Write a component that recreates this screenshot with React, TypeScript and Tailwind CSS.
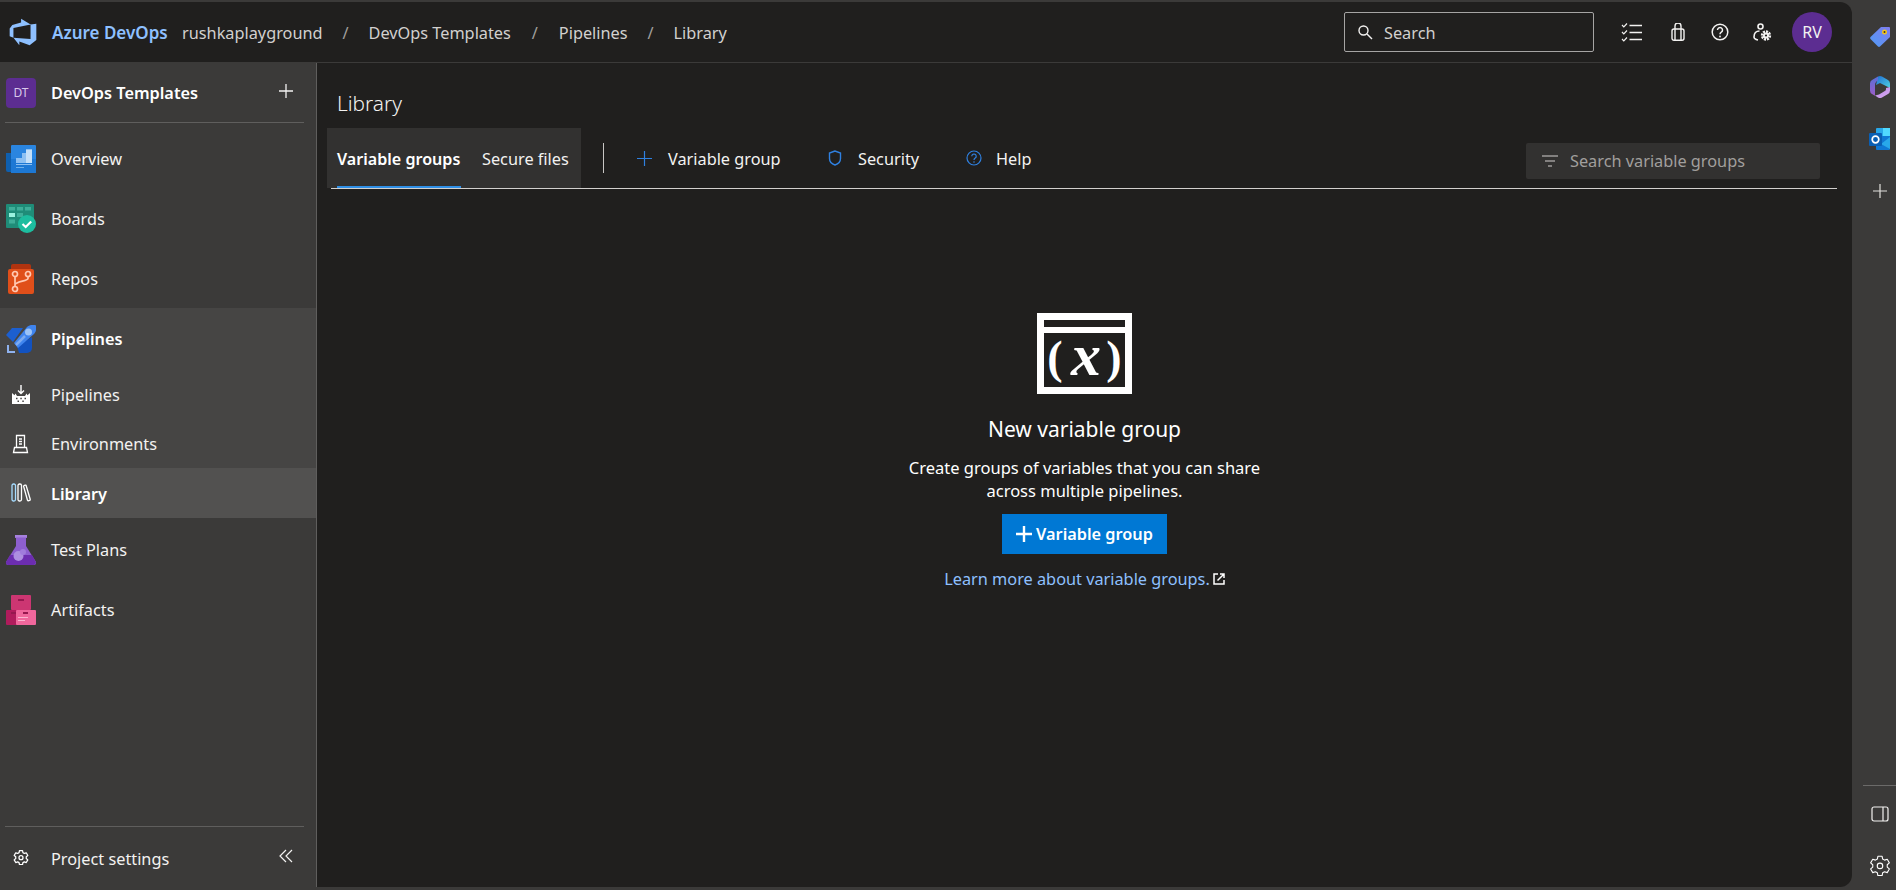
import React from "react";

const Logo = () => (
  <svg width="30" height="30" viewBox="0 0 18 18" fill="#8ec0ff">
    <path d="M17 4v9.74l-4 3.28-6.2-2.26V17l-3.51-4.59 10.23.8V4.44zm-3.41.49L7.85 1v2.29L2.58 4.84 1 6.87v4.61l2.26 1V6.57z" />
  </svg>
);

const OverviewIcon = () => (
  <svg width="30" height="30" viewBox="0 0 30 30">
    <path d="M0 9h8v19H2a2 2 0 0 1-2-2z" fill="#0f5fae" />
    <path d="M5 2a1 1 0 0 1 1-1h23a1 1 0 0 1 1 1v26a1 1 0 0 1-1 1H5z" fill="#2a85e0" />
    <path d="M5 15h25v13a1 1 0 0 1-1 1H5z" fill="#1d78d4" />
    <path d="M10 19v-5h6V9h4V5.500h6V19z" fill="#8dc0f2" />
    <path d="M20 5.500h6V19h-6z" fill="#c5e0f9" />
    <path d="M10 20h16v1H10z" fill="#8dc0f2" />
    <path d="M10 23h8v1h-8z" fill="#6fb0ea" />
  </svg>
);
const BoardsIcon = () => (
  <svg width="30" height="30" viewBox="0 0 30 30">
    <rect x="0" y="0" width="28" height="24" rx="1" fill="#1f8c78" />
    <path d="M3 3h6v3.500H3zM11 3h6v3.500h-6zM19 3h6v3.500h-6zM11 9h6v4h-6zM3 15.500h6v4H3z" fill="#3fae99" />
    <rect x="3" y="9" width="6" height="4" fill="#9bf1de" />
    <circle cx="21" cy="20" r="9" fill="#1dbd9f" />
    <path d="M16.500 20l3.200 3 5.500-5.500" fill="none" stroke="#fff" strokeWidth="2.200" />
  </svg>
);
const ReposIcon = () => (
  <svg width="30" height="30" viewBox="0 0 30 30">
    <path d="M5 2a2 2 0 0 1 2-2h16a2 2 0 0 1 2 2v5H5z" fill="#b0330f" />
    <path d="M2 7a2 2 0 0 1 2-2h22a2 2 0 0 1 2 2v21a2 2 0 0 1-2 2H4a2 2 0 0 1-2-2z" fill="#e04f1a" />
    <g fill="none" stroke="#ffc9b3" strokeWidth="1.700">
      <circle cx="9" cy="10" r="2.500" />
      <circle cx="22" cy="10" r="2.500" />
      <circle cx="9" cy="25" r="2.500" />
      <path d="M9 12.500v10M22 12.500v2c0 2.500-13 3-13 6.500" />
    </g>
  </svg>
);
const RocketIcon = () => (
  <svg width="30" height="30" viewBox="0 0 30 30">
    <path d="M6 4h11L7 18 0 11z" fill="#1c5fd0" />
    <path d="M26 13v11a5 5 0 0 1-5 5H13l-2-7z" fill="#1252c0" />
    <path d="M8 19L21 3c1-1 3-2 4-2h4a1 1 0 0 1 1 1v4c0 1-1 3-2 4L12 24z" fill="#3f84ee" />
    <circle cx="22.500" cy="8" r="3.500" fill="#9cc3f7" />
    <path d="M10 21L19 12" stroke="#7daaf0" strokeWidth="2.500" />
    <path d="M1 21v8h8v-2H3v-6z" fill="#8fb2ee" />
  </svg>
);
const FlaskIcon = () => (
  <svg width="30" height="30" viewBox="0 0 30 30">
    <path d="M9 0h12v3h-1v8l10 16a2.500 2.500 0 0 1-2 3H2a2.500 2.500 0 0 1-2-3L10 11V3H9z" fill="#8d5fcf" />
    <path d="M9 0h12v2.500H9z" fill="#a681dd" />
    <path d="M4 20h22l3.800 7a2.500 2.500 0 0 1-2 3H2a2.500 2.500 0 0 1-2-3z" fill="#6c2db0" />
    <circle cx="12.500" cy="21" r="5" fill="#ad8ee0" />
    <circle cx="17" cy="17" r="3" fill="#a07cdc" />
  </svg>
);
const ArtifactsIcon = () => (
  <svg width="30" height="30" viewBox="0 0 30 30">
    <rect x="5" y="0" width="20" height="15" rx="1" fill="#cc3672" />
    <rect x="0" y="15" width="16" height="15" rx="1" fill="#b01c5c" />
    <rect x="10" y="15" width="20" height="15" rx="1" fill="#f0679c" />
    <path d="M12 4h6v2h-6zM5 17h5v2H5zM17 17h5v2h-5z" fill="#96184f" />
    <path d="M12 22h10v1H12zM12 25h7v1h-7z" fill="#fbb3cf" />
  </svg>
);
const PipeSub = () => (
  <svg width="20" height="20" viewBox="0 0 20 20" fill="none" stroke="#fff" strokeWidth="1.400">
    <path d="M10 0v8M7 5.500L10 8.500l3-3" />
    <path d="M1 8l2.500 2.200 1-1.600 1.500 2.400h8l1.500-2.400 1 1.600L19 8v11H1z" fill="#fff" stroke="none" />
    <path d="M5 13.500h1.500M9.300 13.500h1.500M13.500 13.500h1.500M6.500 16.300h1.500M11.300 16.300h1.500" stroke="#464544" strokeWidth="1.400" />
  </svg>
);
const EnvIcon = () => (
  <svg width="20" height="20" viewBox="0 0 20 20" fill="none" stroke="#fff" strokeWidth="1.300">
    <path d="M5.500 13.500V1.500h8v12M2.500 18.500l1-5h12l1 5z" />
    <path d="M8 5h3M8 7.500h3M8 10h3" />
  </svg>
);
const LibIcon = () => (
  <svg width="20" height="20" viewBox="0 0 20 20" fill="none" stroke="#fff" strokeWidth="1.300">
    <rect x="1" y="1" width="3.500" height="17" rx="1.500" stroke="#a6dcff" />
    <rect x="7" y="1" width="3.500" height="17" rx="1.500" />
    <path d="M12.500 3l1.500-.8c.5-.2 1 0 1.200.5l4 13.500c.1.500 0 1-.5 1.100l-1 .4c-.5.200-1 0-1.200-.5z" />
  </svg>
);
const GearIcon = ({ size = 16, strokeWidth = 1.5 }: { size?: number; strokeWidth?: number }) => (
  <svg width={size} height={size} viewBox="0 0 24 24" fill="none" stroke="#fff" strokeWidth={strokeWidth} strokeLinejoin="round">
    <path d="M9.700 2.500h4.600l.6 3 2.100 1.200 2.900-1 2.300 4-2.300 2v2.600l2.300 2-2.300 4-2.900-1-2.100 1.200-.6 3H9.700l-.6-3L7 19.300l-2.900 1-2.300-4 2.300-2v-2.600l-2.300-2 2.300-4 2.900 1 2.100-1.200z" />
    <circle cx="12" cy="13" r="3" />
  </svg>
);

const Row = ({ icon, label, bold, h = "h-[60px]", bg = "", sub, tp = "pt-[1px]" }: { icon: React.ReactNode; label: string; bold?: boolean; h?: string; bg?: string; sub?: boolean; tp?: string }) => (
  <div className={`flex items-center ${h} ${bg}`}>
    <div className={sub ? "w-[51px] pl-[11px] flex items-center" : "w-[51px] pl-[6px] flex items-center"}>{icon}</div>
    <span className={`${tp} ${bold ? "font-semibold text-white" : "text-[#f3f2f1]"}`}>{label}</span>
  </div>
);

const Sidebar = () => (
  <aside className="w-[317px] shrink-0 bg-[#3b3a39] border-r border-[#5f5e5d] flex flex-col text-[16.300px]">
    <div className="h-[59px] flex items-center pl-[6px] pr-[16px] shrink-0">
      <div className="w-[30px] h-[30px] rounded bg-[#5c2d91] text-[#d8c8ea] text-[12px] flex items-center justify-center">DT</div>
      <span className="ml-[15px] font-semibold text-white flex-1 pt-[2px]">DevOps Templates</span>
      <svg width="16" height="16" viewBox="0 0 16 16" stroke="#f3f2f1" strokeWidth="1.300" className="mr-[6px] -mt-[3px]"><path d="M8 1v14M1 8h14" /></svg>
    </div>
    <div className="h-px bg-[#5f5e5d] ml-[5px] mr-[12px] shrink-0" />
    <div className="h-[6px] shrink-0" />
    <Row icon={<OverviewIcon />} label="Overview" />
    <Row icon={<BoardsIcon />} label="Boards" />
    <Row icon={<ReposIcon />} label="Repos" h="h-[59px]" />
    <div className="bg-[#464544] shrink-0">
      <Row icon={<RocketIcon />} label="Pipelines" bold h="h-[62px]" />
      <Row icon={<PipeSub />} label="Pipelines" h="h-[50px]" sub tp="" />
      <Row icon={<EnvIcon />} label="Environments" h="h-[48px]" sub tp="pt-[1px]" />
      <Row icon={<LibIcon />} label="Library" bold h="h-[50px]" bg="bg-[#525150]" sub tp="pt-[3px]" />
    </div>
    <div className="h-[2px] shrink-0" />
    <Row icon={<FlaskIcon />} label="Test Plans" tp="" />
    <Row icon={<ArtifactsIcon />} label="Artifacts" tp="" />
    <div className="flex-1" />
    <div className="h-px bg-[#5f5e5d] ml-[5px] mr-[12px] shrink-0" />
    <div className="h-[60px] flex items-center shrink-0">
      <div className="w-[51px] pl-[13px] flex items-center"><GearIcon strokeWidth={1.9} /></div>
      <span className="flex-1 text-[#f3f2f1] pt-[4px]">Project settings</span>
      <svg width="16" height="16" viewBox="0 0 16 16" fill="none" stroke="#f3f2f1" strokeWidth="1.200" className="mr-[22px] -mt-[2px]"><path d="M8 2L2 8l6 6M14 2L8 8l6 6" /></svg>
    </div>
  </aside>
);

const Crumb = ({ t }: { t: string }) => <span className="text-[#d2d0ce] pt-[2px]">{t}</span>;
const Slash = ({ w = "w-[46px]" }: { w?: string }) => <span className={`text-[#a19f9d] ${w} text-center pt-[2px]`}>/</span>;

const Header = () => (
  <header className="h-[61px] shrink-0 border-b border-[#3b3a39] flex items-center text-[16.300px]">
    <div className="w-[52px] pl-[8px] flex items-center"><Logo /></div>
    <span className="font-semibold text-[#8ec0ff] w-[130px] text-[17px] pt-[2px]">Azure DevOps</span>
    <Crumb t="rushkaplayground" />
    <Slash />
    <Crumb t="DevOps Templates" />
    <Slash w="w-[48px]" />
    <Crumb t="Pipelines" />
    <Slash />
    <Crumb t="Library" />
    <div className="flex-1" />
    <div className="w-[250px] h-[40px] border border-[#a6a5a4] rounded-[2px] flex items-center pl-[12px] text-[#d2d0ce]">
      <svg width="16" height="16" viewBox="0 0 16 16" fill="none" stroke="#f3f2f1" strokeWidth="1.400"><circle cx="6.500" cy="6.500" r="4.500" /><path d="M10 10l5 5" /></svg>
      <span className="ml-[11px] pt-[2px]">Search</span>
    </div>
    <div className="w-[27px] shrink-0" />
    <svg width="22" height="22" viewBox="0 0 22 22" fill="none" stroke="#f3f2f1" strokeWidth="1.400">
      <path d="M1 4l1.800 1.800L6 2.500M1 11l1.800 1.800L6 9.500M1 18l1.800 1.800L6 16.500" strokeWidth="1.200" />
      <path d="M8.500 4.500H21M8.500 11.500H21M8.500 18.500H21" />
    </svg>
    <div className="w-[28px] shrink-0" />
    <svg width="14" height="18" viewBox="0 0 14 18" fill="none" stroke="#f3f2f1" strokeWidth="1.400">
      <rect x="1" y="6" width="12" height="11.300" rx="2" />
      <path d="M4 6V3a3 3 0 0 1 6 0v3M4 6v11.300M10 6v11.300" />
    </svg>
    <div className="w-[26px] shrink-0" />
    <svg width="18" height="18" viewBox="0 0 18 18" fill="none" stroke="#f3f2f1" strokeWidth="1.500">
      <circle cx="9" cy="9" r="7.800" />
      <path d="M6.500 7a2.500 2.500 0 1 1 3.800 2.200C9.400 9.800 9 10.200 9 11.200" />
      <circle cx="9" cy="13.500" r=".9" fill="#f3f2f1" stroke="none" />
    </svg>
    <div className="w-[24px] shrink-0" />
    <svg width="19" height="19" viewBox="0 0 19 19" fill="none" stroke="#f3f2f1" strokeWidth="1.600">
      <circle cx="7.500" cy="3.500" r="2.500" />
      <path d="M6.500 8C3 8 1 10 1 14c0 1 1.500 2.500 4 3" />
      <circle cx="13" cy="12.500" r="3.800" strokeWidth="2.800" strokeDasharray="2 .9" />
      <circle cx="13" cy="12.500" r="3" fill="#f3f2f1" stroke="none" />
      <circle cx="13" cy="12.500" r="1.100" fill="#201f1e" stroke="none" />
    </svg>
    <div className="w-[20px] shrink-0" />
    <div className="w-[40px] h-[40px] rounded-full bg-[#5c2d91] text-[#f3f2f1] flex items-center justify-center text-[16px]">RV</div>
    <div className="w-[20px] shrink-0" />
  </header>
);

const ToolBtn = ({ icon, label, gap = "ml-[16px]", w }: { icon: React.ReactNode; label: string; gap?: string; w: string }) => (
  <div className={`flex items-center ${w}`}>
    {icon}
    <span className={`${gap} text-[#f3f2f1] pt-[3px]`}>{label}</span>
  </div>
);

const Toolbar = () => (
  <div className="h-[61px] mt-[1px] ml-[14px] mr-[15px] flex items-stretch border-b border-[#d2d0ce] text-[16.300px] shrink-0">
    <div className="-ml-[4px] w-[254px] h-[60px] bg-[#323130] flex items-center relative pl-[10px] shrink-0">
      <span className="font-semibold text-white w-[145px] pt-[3px] text-[16.100px]">Variable groups</span>
      <span className="text-[#f3f2f1] pt-[3px]">Secure files</span>
      <div className="absolute left-[10px] w-[124px] h-[2px] bg-[#2f8fe6] bottom-0" />
    </div>
    <div className="w-[22px] shrink-0" />
    <div className="w-px h-[30px] mt-[15px] bg-[#c8c6c4] shrink-0" />
    <div className="w-[33px] shrink-0" />
    <ToolBtn w="w-[191px]" gap="ml-[16px]" label="Variable group" icon={
      <svg width="15" height="15" viewBox="0 0 15 15" stroke="#2f80e0" strokeWidth="1.200"><path d="M7.500 0v15M0 7.500h15" /></svg>
    } />
    <ToolBtn w="w-[138px]" gap="ml-[16px]" label="Security" icon={
      <svg width="14" height="16" viewBox="0 0 14 16" fill="none" stroke="#2f80e0" strokeWidth="1.400"><path d="M7 1L1.500 3v5.500C1.500 12 4 14 7 15c3-1 5.500-3 5.500-6.500V3z" /></svg>
    } />
    <ToolBtn w="w-[120px]" gap="ml-[14px]" label="Help" icon={
      <svg width="16" height="16" viewBox="0 0 16 16" fill="none" stroke="#2f80e0" strokeWidth="1.200">
        <circle cx="8" cy="8" r="7" /><path d="M5.800 6.200a2.200 2.200 0 1 1 3.400 1.900c-.8.500-1.200.9-1.200 1.900" /><circle cx="8" cy="12" r=".8" fill="#2f80e0" stroke="none" />
      </svg>
    } />
    <div className="flex-1" />
    <div className="w-[294px] h-[36px] mt-[15px] mr-[17px] rounded-[2px] bg-[#323130] flex items-center pl-[16px] text-[#a19f9d] shrink-0">
      <svg width="16" height="12" viewBox="0 0 16 12" stroke="#d2d0ce" strokeWidth="1.200"><path d="M0 1h16M3 6h10M6 11h4" /></svg>
      <span className="ml-[12px] pt-[1px] text-[16.300px]">Search variable groups</span>
    </div>
  </div>
);

const VarIcon = () => (
  <svg width="95" height="81" viewBox="0 0 95 81" className="shrink-0">
    <path fillRule="evenodd" d="M0 0h95v81H0zM7 7v7h81V7zM7 20v54h81V20z" fill="#fff" />
    <g fill="#fff" fontFamily="'Liberation Serif', serif" textAnchor="middle" fontWeight="700">
      <text x="18" y="60" fontSize="46">(</text>
      <text x="49" y="62" fontSize="60" fontStyle="italic">x</text>
      <text x="77" y="60" fontSize="46">)</text>
    </g>
  </svg>
);

const Empty = () => (
  <div className="flex flex-col items-center mt-[124px] text-white">
    <VarIcon />
    <div className="mt-[20px] text-[21px] leading-[30px]">New variable group</div>
    <div className="mt-[12px] text-[16.500px] leading-[23px] text-center">
      <div>Create groups of variables that you can share</div>
      <div>across multiple pipelines.</div>
    </div>
    <div className="mt-[12px] h-[40px] w-[165px] bg-[#0078d4] flex items-center justify-center font-semibold text-[16.300px]">
      <svg width="16" height="16" viewBox="0 0 16 16" stroke="#fff" strokeWidth="2.400" className="mr-[4px]"><path d="M8 0v16M0 8h16" /></svg>
      Variable group
    </div>
    <div className="mt-[13px] flex items-center text-[#8ec0ff] text-[16.300px] leading-[24px]">
      <span>Learn more about variable groups.</span>
      <svg width="12" height="12" viewBox="0 0 12 12" fill="none" stroke="#fff" strokeWidth="1.500" className="ml-[3px]">
        <path d="M5 1H1v10h10V7M4.500 7.500L10.500 1.500M7 1h4v4" />
      </svg>
    </div>
  </div>
);

const TagIcon = () => (
  <svg width="22" height="22" viewBox="0 0 22 22">
    <defs>
      <linearGradient id="tagGrad" x1="0" y1="1" x2="1" y2="0">
        <stop offset="0" stopColor="#4f9cf5" />
        <stop offset="1" stopColor="#7f7df0" />
      </linearGradient>
    </defs>
    <path d="M12 1h8a1 1 0 0 1 1 1v9L11 20.500a1.500 1.500 0 0 1-2 0L1.500 13a1.500 1.500 0 0 1 0-2z" fill="url(#tagGrad)" />
    <circle cx="15.500" cy="6" r="2.500" fill="#f5c518" />
    <circle cx="15.500" cy="6" r="1" fill="#333" />
  </svg>
);
const CopilotIcon = () => (
  <svg width="22" height="24" viewBox="0 0 22 24">
    <defs>
      <linearGradient id="cpA" x1="0" y1="0" x2="1" y2="1">
        <stop offset="0" stopColor="#1f6fd6" />
        <stop offset="1" stopColor="#4fd0e0" />
      </linearGradient>
      <linearGradient id="cpB" x1="0" y1="0" x2="0" y2="1">
        <stop offset="0" stopColor="#5a70d8" />
        <stop offset="1" stopColor="#9a5cc8" />
      </linearGradient>
      <linearGradient id="cpC" x1="0" y1="0" x2="1" y2="1">
        <stop offset="0" stopColor="#b98ae8" />
        <stop offset="1" stopColor="#d8a8f0" />
      </linearGradient>
    </defs>
    <path d="M9 1.500a4 4 0 0 1 4 0l6 3.500a4 4 0 0 1 2 3.500V13l-6-3-4-2-4 2 2-8z" fill="url(#cpA)" />
    <path d="M9 1.500L3 5a4 4 0 0 0-2 3.500v7A4 4 0 0 0 3 19l3 1.700V10c0-2 1-3.500 3-4.500z" fill="url(#cpB)" />
    <path d="M21 12v3.500a4 4 0 0 1-2 3.500l-6 3.500a4 4 0 0 1-4 0L6 20.500l4-1 5-3c2-1 2-1.500 2-3.500z" fill="url(#cpC)" />
  </svg>
);
const OutlookIcon = () => (
  <svg width="22" height="22" viewBox="0 0 22 22">
    <path d="M7 1a1 1 0 0 1 1-1h12a1 1 0 0 1 1 1v8H7z" fill="#28a8ea" />
    <path d="M14 0h7v9h-7z" fill="#50d9ff" />
    <path d="M7 8h14v13a1 1 0 0 1-1 1H8a1 1 0 0 1-1-1z" fill="#0f78d4" />
    <path d="M21 9v12l-9-5z" fill="#28a8ea" />
    <rect x="0" y="5" width="13" height="13" rx="1" fill="#0a5fb4" />
    <circle cx="6.500" cy="11.500" r="3.300" fill="none" stroke="#fff" strokeWidth="1.700" />
  </svg>
);

const Rail = () => (
  <div className="w-[44px] shrink-0 flex flex-col items-center pl-[11px]">
    <div className="h-[26px] shrink-0" />
    <TagIcon />
    <div className="h-[27px] shrink-0" />
    <CopilotIcon />
    <div className="h-[29px] shrink-0" />
    <OutlookIcon />
    <div className="h-[34px] shrink-0" />
    <svg width="14" height="14" viewBox="0 0 14 14" stroke="#e1dfdd" strokeWidth="1.200"><path d="M7 0v14M0 7h14" /></svg>
    <div className="flex-1" />
    <div className="w-[34px] h-px bg-[#6b6a69] shrink-0" />
    <div className="h-[20px] shrink-0" />
    <svg width="18" height="16" viewBox="0 0 18 16" fill="none" stroke="#f3f2f1" strokeWidth="1.200">
      <rect x="1" y="1" width="16" height="14" rx="2" /><path d="M12 1v14" />
    </svg>
    <div className="h-[32px] shrink-0" />
    <GearIcon size={22} strokeWidth={1.200} />
    <div className="h-[14px] shrink-0" />
  </div>
);

export default function App() {
  return (
    <div className="w-[1896px] h-[890px] bg-[#3b3a39] flex overflow-hidden font-['Noto_Sans','Open_Sans',sans-serif]">
      <div className="w-[1852px] mt-[2px] mb-[3px] bg-[#201f1e] rounded-r-xl overflow-hidden flex flex-col shrink-0">
        <Header />
        <div className="flex flex-1 min-h-0">
          <Sidebar />
          <main className="flex-1 flex flex-col min-w-0">
            <div className="h-[64px] pl-[20px] flex items-end text-[20.800px] font-light text-[#f3f2f1] leading-[38px] shrink-0 pb-[5px]">Library</div>
            <Toolbar />
            <Empty />
          </main>
        </div>
      </div>
      <Rail />
    </div>
  );
}
